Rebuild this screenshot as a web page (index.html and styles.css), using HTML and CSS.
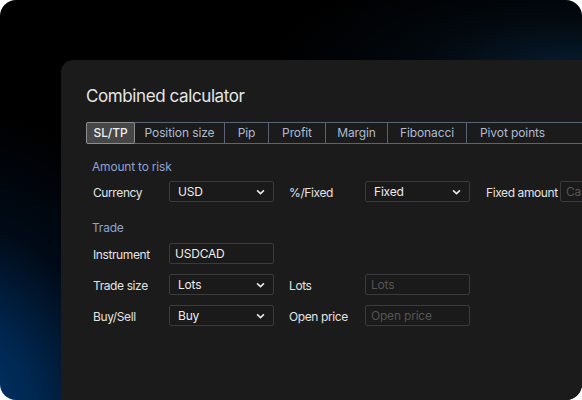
FILE: index.html
```html
<!DOCTYPE html>
<html>
<head>
<meta charset="utf-8">
<link rel="stylesheet" href="styles.css">
</head>
<body>
<div class="frame">
  <div class="panel">
    <h1 class="title">Combined calculator</h1>
    <div class="tabs">
      <div class="tab active">SL/TP</div>
      <div class="tab w-pos">Position size</div>
      <div class="tab w-pip">Pip</div>
      <div class="tab w-profit">Profit</div>
      <div class="tab w-margin">Margin</div>
      <div class="tab w-fib">Fibonacci</div>
      <div class="tab w-pivot">Pivot points</div>
    </div>

    <div class="section">
      <div class="section-label">Amount to risk</div>
      <div class="row">
        <span class="label">Currency</span>
        <div class="control select"><span>USD</span><svg class="chev" viewBox="0 0 10 6"><path d="M1.2 1.2 5 4.8 8.8 1.2"/></svg></div>
        <span class="label">%/Fixed</span>
        <div class="control select"><span>Fixed</span><svg class="chev" viewBox="0 0 10 6"><path d="M1.2 1.2 5 4.8 8.8 1.2"/></svg></div>
        <span class="label label3">Fixed amount</span>
        <div class="control input"><span class="ph">Cash</span></div>
      </div>
    </div>

    <div class="section">
      <div class="section-label trade">Trade</div>
      <div class="row">
        <span class="label">Instrument</span>
        <div class="control input"><span>USDCAD</span></div>
      </div>
      <div class="row">
        <span class="label">Trade size</span>
        <div class="control select"><span>Lots</span><svg class="chev" viewBox="0 0 10 6"><path d="M1.2 1.2 5 4.8 8.8 1.2"/></svg></div>
        <span class="label">Lots</span>
        <div class="control input"><span class="ph">Lots</span></div>
      </div>
      <div class="row">
        <span class="label">Buy/Sell</span>
        <div class="control select"><span>Buy</span><svg class="chev" viewBox="0 0 10 6"><path d="M1.2 1.2 5 4.8 8.8 1.2"/></svg></div>
        <span class="label">Open price</span>
        <div class="control input"><span class="ph">Open price</span></div>
      </div>
    </div>
  </div>
</div>
</body>
</html>
```

FILE: styles.css
```css
* { box-sizing: border-box; }
html, body { margin: 0; padding: 0; background: #ffffff; }
body { font-family: Inter, "Open Sans", sans-serif; }

.frame {
  width: 582px;
  height: 400px;
  border-radius: 16px;
  overflow: hidden;
  background:
    radial-gradient(ellipse 240px 320px at -40px 430px, #003a73 0%, #00264e 35%, rgba(0,20,45,0.5) 65%, rgba(0,0,0,0) 100%),
    radial-gradient(ellipse 300px 110px at 570px 70px, #071c2e 0%, rgba(4,16,28,0.5) 50%, rgba(0,0,0,0) 100%),
    #000000;
  padding: 60px 0 0 61px;
  display: flex;
}

.panel {
  flex: 1;
  min-width: 0;
  background: #1b1b1b;
  border-top-left-radius: 12px;
  padding: 24px 0 0 25px;
  overflow: hidden;
}

.title {
  margin: 0;
  font-size: 17px;
  font-weight: 400;
  line-height: 24px;
  color: #e6e6e6;
  letter-spacing: -0.4px;
}

.tabs {
  display: flex;
  margin-top: 14px;
  height: 22px;
  width: max-content;
  border: 1px solid #5a6476;
  border-radius: 2px;
}
.tab {
  flex-shrink: 0;
  font-size: 12px;
  line-height: 20px;
  color: #aebad0;
  text-align: center;
  border-right: 1px solid #5a6476;
  letter-spacing: -0.1px;
  white-space: nowrap;
}
.tab.active {
  width: 49px;
  background: #474747;
  color: #f0f0f0;
  border: 1px solid #8e8e8e;
  margin: -1px 0 -1px -1px;
  height: 22px;
  line-height: 20px;
  border-radius: 2px;
  font-weight: 500;
}
.w-pos { width: 90px; }
.w-pip { width: 44px; }
.w-profit { width: 57px; }
.w-margin { width: 62px; }
.w-fib { width: 79px; }
.w-pivot { width: 116px; text-align: left; padding-left: 13px; }

.section { padding-left: 6px; }
.section-label {
  font-size: 12px;
  line-height: 16px;
  color: #8ea2cf;
  margin-top: 15px;
  letter-spacing: -0.2px;
}
.section-label.trade { margin-top: 18px; }

.row {
  display: flex;
  align-items: center;
  width: max-content;
  height: 21px;
}
.section-label + .row { margin-top: 6px; }
.section-label.trade + .row { margin-top: 7px; }
.section .row + .row { margin-top: 10px; }

.label {
  flex-shrink: 0;
  width: 77px;
  font-size: 12px;
  color: #e2e2e2;
  padding-left: 1px;
  padding-top: 1px;
  letter-spacing: -0.4px;
  white-space: nowrap;
}
.control + .label { margin-left: 14px; }
.control + .label.label3 { margin-left: 15px; width: 75px; }

.control {
  width: 105px;
  height: 21px;
  flex-shrink: 0;
  border: 1px solid #3b3b3b;
  border-radius: 2px;
  background: #1a1a1a;
  display: flex;
  align-items: center;
  justify-content: space-between;
  padding: 0 8px 0 8px;
  font-size: 12px;
  color: #ececec;
  letter-spacing: -0.2px;
}
.control.input { padding-left: 5px; }
.ph { color: #555555; }
.chev {
  width: 9px;
  height: 6px;
  fill: none;
  stroke: #e8e8e8;
  stroke-width: 1.8;
}
```
